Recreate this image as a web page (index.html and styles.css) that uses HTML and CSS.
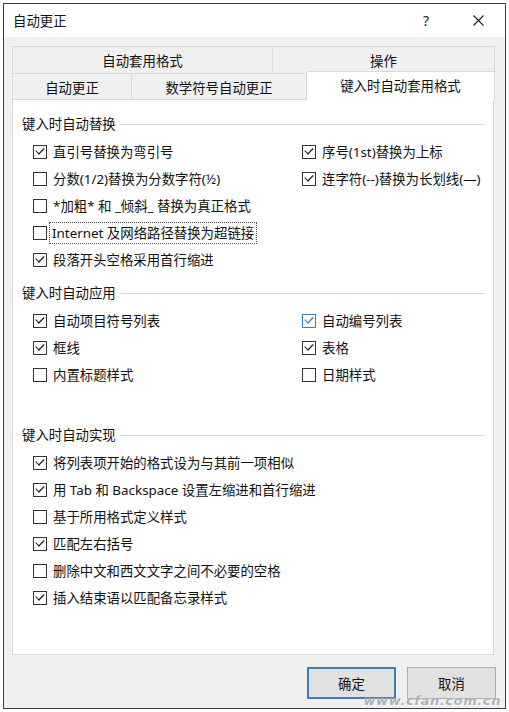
FILE: index.html
```html
<!DOCTYPE html>
<html lang="zh-CN">
<head>
<meta charset="utf-8">
<title>自动更正</title>
<link rel="stylesheet" href="styles.css">
</head>
<body>
<div class="window">
  <div class="titlebar">
    <span class="title">自动更正</span>
    <span class="help">?</span>
    <span class="close"><svg width="11" height="11" viewBox="0 0 11 11"><path d="M0.5 0.5 L10.5 10.5 M10.5 0.5 L0.5 10.5" stroke="#222" stroke-width="1.1" fill="none"/></svg></span>
  </div>
  <div class="body">
    <div class="tabs">
      <div class="tabrow row1">
        <div class="tab t-format">自动套用格式</div>
        <div class="tab t-action">操作</div>
      </div>
      <div class="tabrow row2">
        <div class="tab t-auto">自动更正</div>
        <div class="tab t-math">数学符号自动更正</div>
        <div class="tab t-active">键入时自动套用格式</div>
      </div>
    </div>
    <div class="panel">
      <div class="section s1">
        <div class="header"><span>键入时自动替换</span><i class="rule"></i></div>
        <div class="grid">
          <label class="item"><span class="box checked"></span><span>直引号替换为弯引号</span></label>
          <label class="item"><span class="box checked"></span><span>序号(1st)替换为上标</span></label>
          <label class="item"><span class="box"></span><span>分数(1/2)替换为分数字符(½)</span></label>
          <label class="item"><span class="box checked"></span><span>连字符(--)替换为长划线(—)</span></label>
          <label class="item"><span class="box"></span><span>*加粗* 和 _倾斜_ 替换为真正格式</span></label>
          <div></div>
          <label class="item"><span class="box"></span><span class="focus">Internet 及网络路径替换为超链接</span></label>
          <div></div>
          <label class="item"><span class="box checked"></span><span>段落开头空格采用首行缩进</span></label>
          <div></div>
        </div>
      </div>
      <div class="section s2">
        <div class="header"><span>键入时自动应用</span><i class="rule"></i></div>
        <div class="grid">
          <label class="item"><span class="box checked"></span><span>自动项目符号列表</span></label>
          <label class="item"><span class="box checked hover"></span><span>自动编号列表</span></label>
          <label class="item"><span class="box checked"></span><span>框线</span></label>
          <label class="item"><span class="box checked"></span><span>表格</span></label>
          <label class="item"><span class="box"></span><span>内置标题样式</span></label>
          <label class="item"><span class="box"></span><span>日期样式</span></label>
        </div>
      </div>
      <div class="section s3">
        <div class="header"><span>键入时自动实现</span><i class="rule"></i></div>
        <div class="list">
          <label class="item"><span class="box checked"></span><span>将列表项开始的格式设为与其前一项相似</span></label>
          <label class="item"><span class="box checked"></span><span>用 Tab 和 Backspace 设置左缩进和首行缩进</span></label>
          <label class="item"><span class="box"></span><span>基于所用格式定义样式</span></label>
          <label class="item"><span class="box checked"></span><span>匹配左右括号</span></label>
          <label class="item"><span class="box"></span><span>删除中文和西文文字之间不必要的空格</span></label>
          <label class="item"><span class="box checked"></span><span>插入结束语以匹配备忘录样式</span></label>
        </div>
      </div>
    </div>
    <div class="buttons">
      <button class="btn primary">确定</button>
      <button class="btn">取消</button>
    </div>
  </div>
  <div class="watermark">www.cfan.com.cn</div>
</div>
</body>
</html>
```
FILE: styles.css
```css
* { box-sizing: border-box; }
html, body { margin: 0; padding: 0; background: #fff; }
body {
  font-family: "Noto Sans", "Noto Sans CJK SC", sans-serif;
  font-size: 13.4px;
  color: #111;
  padding: 3px 0 0 3px;
}
.window {
  position: relative;
  width: 503px;
  height: 706px;
  border: 1px solid #40384a;
  background: #f0f0f0;
  display: flex;
  flex-direction: column;
}
.titlebar {
  height: 33px;
  background: #fff;
  display: flex;
  align-items: center;
  padding: 0 0 0 9px;
  flex: none;
}
.title { flex: 1; line-height: 20px; }
.help { width: 14px; margin-right: 36px; font-size: 14px; line-height: 20px; color: #222; }
.close { width: 11px; height: 11px; margin-right: 21px; display: flex; }
.body {
  flex: 1;
  padding: 9px 10px 0 8px;
  display: flex;
  flex-direction: column;
}
.tabs { display: flex; flex-direction: column; flex: none; }
.tabrow { display: flex; height: 27px; }
.tab {
  background: #f0f0f0;
  border: 1px solid #d9d9d9;
  border-bottom: none;
  display: flex;
  align-items: center;
  justify-content: center;
  line-height: 20px;
}
.row1 .tab { padding-top: 2px; }
.t-format { width: 261px; }
.t-action { flex: 1; border-left: none; }
.row2 { position: relative; }
.t-auto { width: 120px; border-bottom: 1px solid #d9d9d9; padding-top: 2px; }
.t-math { width: 175px; border-left: none; border-bottom: 1px solid #d9d9d9; padding-top: 2px; }
.t-active {
  flex: 1;
  background: #fff;
  border-left: none;
  margin-top: -2px;
  height: 29px;
  position: relative;
  z-index: 1;
}
.panel {
  height: 555px;
  background: #fff;
  border: 1px solid #d9d9d9;
  border-top: none;
  margin-right: 1px;
  padding: 14px 8px 0 9px;
  flex: none;
}
.header {
  display: flex;
  align-items: center;
  height: 20px;
  line-height: 20px;
  gap: 4px;
}
.rule { flex: 1; height: 1px; background: #dcdcdc; font-style: normal; }
.grid {
  display: grid;
  grid-template-columns: 269px 1fr;
  grid-auto-rows: 27px;
  padding-left: 11px;
  margin-top: 4px;
}
.list {
  display: flex;
  flex-direction: column;
  padding-left: 11px;
  margin-top: 4px;
}
.list .item { height: 27px; }
.s2 { margin-top: 10px; }
.s3 { margin-top: 37px; }
.item {
  display: flex;
  align-items: center;
  gap: 6px;
  white-space: nowrap;
  line-height: 18px;
}
.box {
  width: 14px;
  height: 14px;
  border: 1px solid #333;
  background: #fff;
  flex: none;
  position: relative;
}
.box.checked::after {
  content: "";
  position: absolute;
  left: 3.5px;
  top: 0.5px;
  width: 3px;
  height: 7px;
  border-right: 1.2px solid #222;
  border-bottom: 1.2px solid #222;
  transform: rotate(45deg) scaleX(1.3);
  transform-origin: center;
}
.box.hover { border-color: #3c7fb1; }
.box.hover::after { border-color: #3c7fb1; }
.focus { outline: 1px dotted #555; outline-offset: 1px; padding: 0 1px; margin-left: -2px; }
.buttons {
  display: flex;
  justify-content: flex-end;
  gap: 11px;
  padding-top: 12px;
  margin-right: -1px;
}
.btn {
  width: 89px;
  height: 32px;
  font-family: inherit;
  font-size: 13.4px;
  color: #111;
  background: #e1e1e1;
  border: 1px solid #adadad;
  padding: 0;
}
.btn.primary { border: 2px solid #3c7fb1; }
.watermark {
  position: absolute;
  right: 4px;
  bottom: 1px;
  font-family: "DejaVu Sans", sans-serif;
  font-style: italic;
  font-weight: bold;
  font-size: 13px;
  line-height: 12px;
  letter-spacing: 0.6px;
  color: rgba(110, 110, 120, 0.55);
  text-shadow: 0 0 1px #fff;
}
```
